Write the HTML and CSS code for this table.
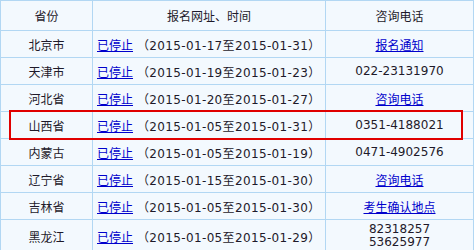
FILE: index.html
```html
<!DOCTYPE html>
<html lang="zh-CN">
<head>
<meta charset="utf-8">
<link rel="stylesheet" href="styles.css">
</head>
<body>
<div class="wrap">
  <div class="grid">
    <div class="cell head">省份</div>
    <div class="cell head">报名网址、时间</div>
    <div class="cell head">咨询电话</div>

    <div class="cell c">北京市</div>
    <div class="cell l"><a href="#">已停止</a><span class="date">（2015-01-17至2015-01-31）</span></div>
    <div class="cell c"><a href="#">报名通知</a></div>

    <div class="cell c">天津市</div>
    <div class="cell l"><a href="#">已停止</a><span class="date">（2015-01-19至2015-01-23）</span></div>
    <div class="cell c">022-23131970</div>

    <div class="cell c">河北省</div>
    <div class="cell l"><a href="#">已停止</a><span class="date">（2015-01-20至2015-01-27）</span></div>
    <div class="cell c"><a href="#">咨询电话</a></div>

    <div class="cell c">山西省</div>
    <div class="cell l"><a href="#">已停止</a><span class="date">（2015-01-05至2015-01-31）</span></div>
    <div class="cell c">0351-4188021</div>

    <div class="cell c">内蒙古</div>
    <div class="cell l"><a href="#">已停止</a><span class="date">（2015-01-05至2015-01-19）</span></div>
    <div class="cell c">0471-4902576</div>

    <div class="cell c">辽宁省</div>
    <div class="cell l"><a href="#">已停止</a><span class="date">（2015-01-15至2015-01-30）</span></div>
    <div class="cell c"><a href="#">咨询电话</a></div>

    <div class="cell c">吉林省</div>
    <div class="cell l"><a href="#">已停止</a><span class="date">（2015-01-05至2015-01-30）</span></div>
    <div class="cell c"><a href="#">考生确认地点</a></div>

    <div class="cell c last">黑龙江</div>
    <div class="cell l last"><a href="#">已停止</a><span class="date">（2015-01-05至2015-01-29）</span></div>
    <div class="cell c last two">82318257<br>53625977</div>
  </div>
  <div class="highlight"></div>
</div>
</body>
</html>
```
FILE: styles.css
```css
html, body {
  margin: 0;
  padding: 0;
  background: #ffffff;
}
.wrap {
  position: relative;
  width: 474px;
  font-family: "DejaVu Sans", "Noto Sans CJK SC", sans-serif;
  font-size: 12px;
  color: #1e1a2a;
}
.grid {
  display: grid;
  grid-template-columns: 91px 232px 147px;
  grid-template-rows: 29px repeat(7, 26px) auto;
  gap: 1px;
  background: #b2d7f3;
  border: 1px solid #b2d7f3;
  width: 474px;
  box-sizing: border-box;
}
.cell {
  background: #f3f9fe;
  display: flex;
  align-items: center;
  white-space: nowrap;
}
.head, .c {
  justify-content: center;
  text-align: center;
}
.l {
  padding-left: 4px;
}
.last {
  padding: 3px 0;
  min-height: 26px;
}
.l.last {
  padding-left: 4px;
}
.two {
  line-height: 13px;
}
a {
  color: #0000cc;
  text-decoration: underline;
}
.date {
  margin-left: 4px;
  letter-spacing: 0.35px;
}
.highlight {
  position: absolute;
  left: 9px;
  top: 110px;
  width: 454px;
  height: 30px;
  border: 2px solid #e00000;
  box-sizing: border-box;
  pointer-events: none;
}
```
